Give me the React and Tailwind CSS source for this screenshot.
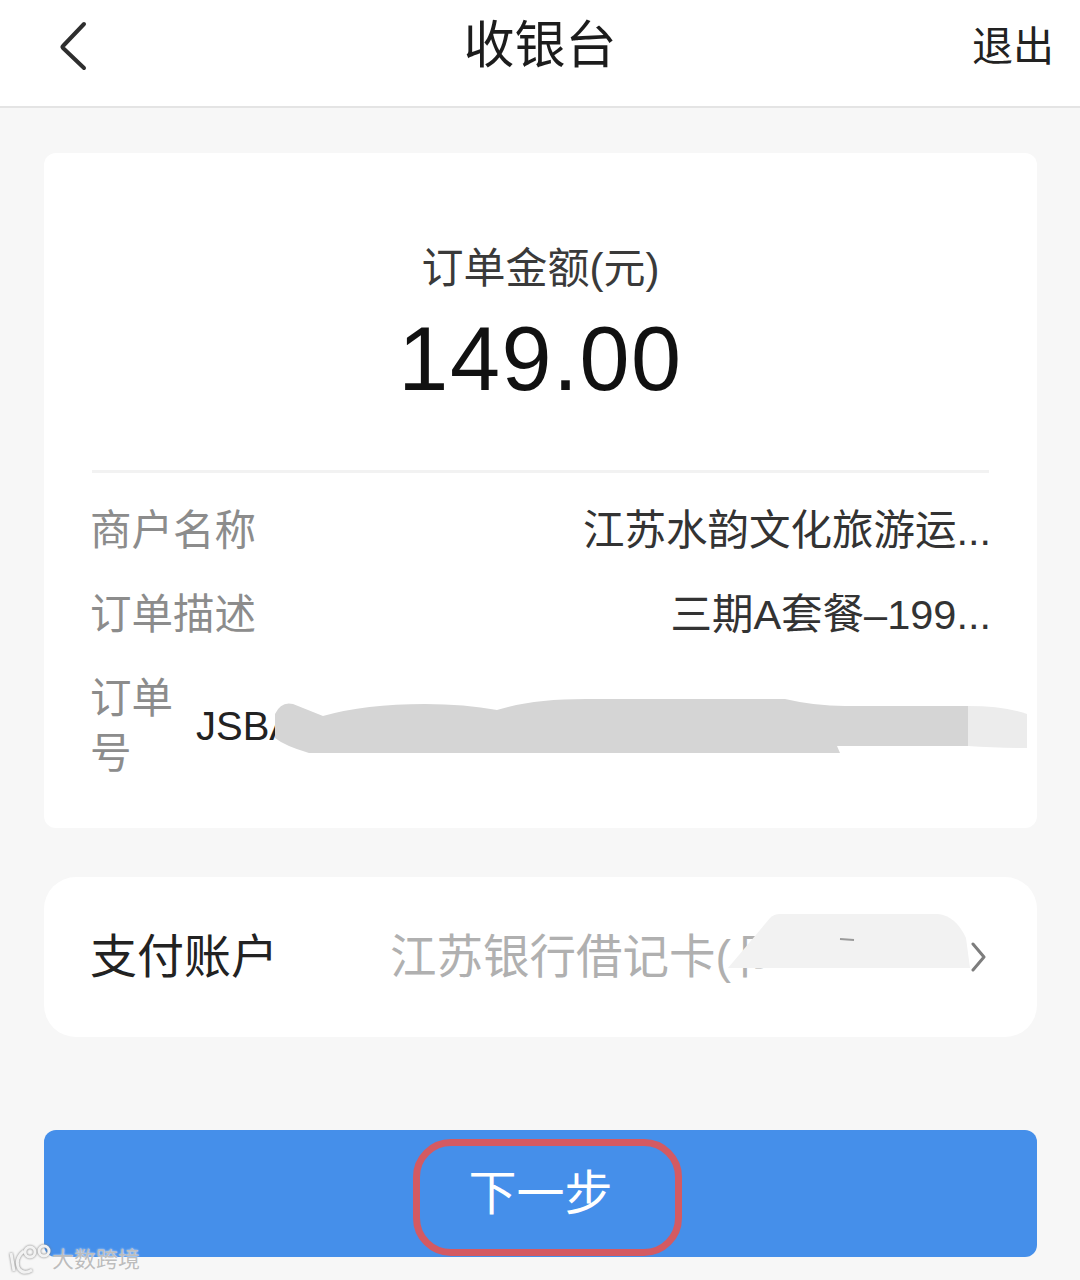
import React from 'react';

const cjk = "font-['Liberation_Sans','Noto_Sans_CJK_SC',sans-serif]";

const InfoRow = ({ label, value, className = '' }) => (
  <div className={`flex items-center justify-between leading-[56px] ${className}`}>
    <span className="ml-[-2px] text-[41.5px] text-[#8c8c8c]">{label}</span>
    <span className="mr-[-2px] text-[41.5px] text-[#333333]">{value}</span>
  </div>
);

const App = () => {
  return (
    <div className={`relative w-[1080px] h-[1280px] overflow-hidden bg-[#f7f7f7] ${cjk}`}>
      {/* header */}
      <header className="grid grid-cols-[1fr_auto_1fr] items-center h-[108px] bg-white border-b-2 border-[#e4e4e4] px-[26px]">
        <svg width="32" height="50" viewBox="0 0 32 50" fill="none" className="ml-[32px] mb-[14px]">
          <path d="M26 3 L5 25 Q4 26 5 27 L26 47" stroke="#2e2e2e" strokeWidth="4" strokeLinecap="round" strokeLinejoin="round" />
        </svg>
        <h1 className="text-[51px] leading-[60px] text-[#1c1c1c] mb-[14px]">收银台</h1>
        <button className="justify-self-end text-[41px] leading-[56px] text-[#222222] mb-[12px]">退出</button>
      </header>

      <main className="px-[44px] w-[1081px]">
        {/* order card */}
        <section className="relative mt-[45px] h-[675px] bg-white rounded-[12px] px-[48px] pt-[88px]">
          <div className="text-center text-[42px] leading-[56px] text-[#3a3a3a]">订单金额(元)</div>
          <div className="text-center text-[90px] leading-[100px] tracking-[1.5px] mt-[12px] text-[#111111]">149.00</div>
          <div className="h-[3px] bg-[#f2f2f2] mt-[61px] mb-[30px]" />
          <InfoRow label="商户名称" value="江苏水韵文化旅游运..." />
          <InfoRow label="订单描述" value="三期A套餐–199..." className="mt-[28px]" />
          <div className="flex items-center mt-[28px]">
            <span className="ml-[-2px] w-[106px] text-[41.5px] leading-[55px] text-[#8c8c8c]">订单号</span>
            <span className="text-[40px] leading-[56px] text-[#222222]">JSBA</span>
          </div>
          {/* redaction smear */}
          <svg width="790" height="60" viewBox="0 0 790 60" className="absolute left-[231px] top-[545px]">
            <path d="M0 16 Q6 3 18 6 L48 18 Q90 6 150 6 Q190 6 222 12 Q260 0 320 1 L510 1 Q540 8 570 8 L693 8 L693 48 L562 48 L565 55 L34 55 Q10 48 0 40 Z" fill="#d5d5d5" />
            <path d="M693 8 Q730 8 752 16 L752 50 Q720 50 693 48 Z" fill="#ececec" />
          </svg>
        </section>

        {/* pay account */}
        <section className="relative flex items-center h-[160px] mt-[49px] bg-white rounded-[32px] pl-[48px] pr-[50px]">
          <span className="ml-[-2px] w-[300px] text-[47px] leading-[60px] text-[#222222]">支付账户</span>
          <span className="flex-1 text-[46.5px] leading-[60px] text-[#b0b0b0]">江苏银行借记卡(卩</span>
          <svg width="16" height="30" viewBox="0 0 16 30" fill="none">
            <path d="M2 2 L13 15 L2 28" stroke="#7d7d7d" strokeWidth="3" strokeLinecap="round" strokeLinejoin="round" />
          </svg>
          {/* redaction smear */}
          <svg width="250" height="58" viewBox="0 0 250 58" className="absolute left-[684px] top-[37px]">
            <path d="M0 54 L42 4 Q46 0 52 0 L210 0 Q228 2 238 24 L242 54 Z" fill="#f2f2f2" />
            <path d="M112 25 L126 26" stroke="#9a9a9a" strokeWidth="2" />
          </svg>
        </section>

        {/* next button */}
        <div className="flex items-center justify-center h-[127px] mt-[93px] bg-[#458fea] rounded-[12px]">
          <span className="text-[48px] leading-[60px] text-white">下一步</span>
        </div>
      </main>

      {/* red highlight over the button */}
      <div className="absolute left-[413px] top-[1139px] w-[269px] h-[117px] border-[7px] border-[#d45a62] rounded-[38px]" />

      {/* watermark */}
      <div className="absolute left-[6px] top-[1243px] flex items-center">
        <svg width="46" height="34" viewBox="0 0 46 34" fill="none" stroke="#f2f2f2" strokeWidth="3" className="drop-shadow-[0_0_1px_#777777]">
          <path d="M5 10 L8 28 M18 8 Q8 16 13 26 Q18 32 26 27" />
          <circle cx="24" cy="9" r="5" />
          <circle cx="38" cy="8" r="5" />
        </svg>
        <span className="text-[22px] leading-[30px] text-[#bdbdbd] [text-shadow:0_0_2px_#ffffff]">大数跨境</span>
      </div>
    </div>
  );
};

export default App;
